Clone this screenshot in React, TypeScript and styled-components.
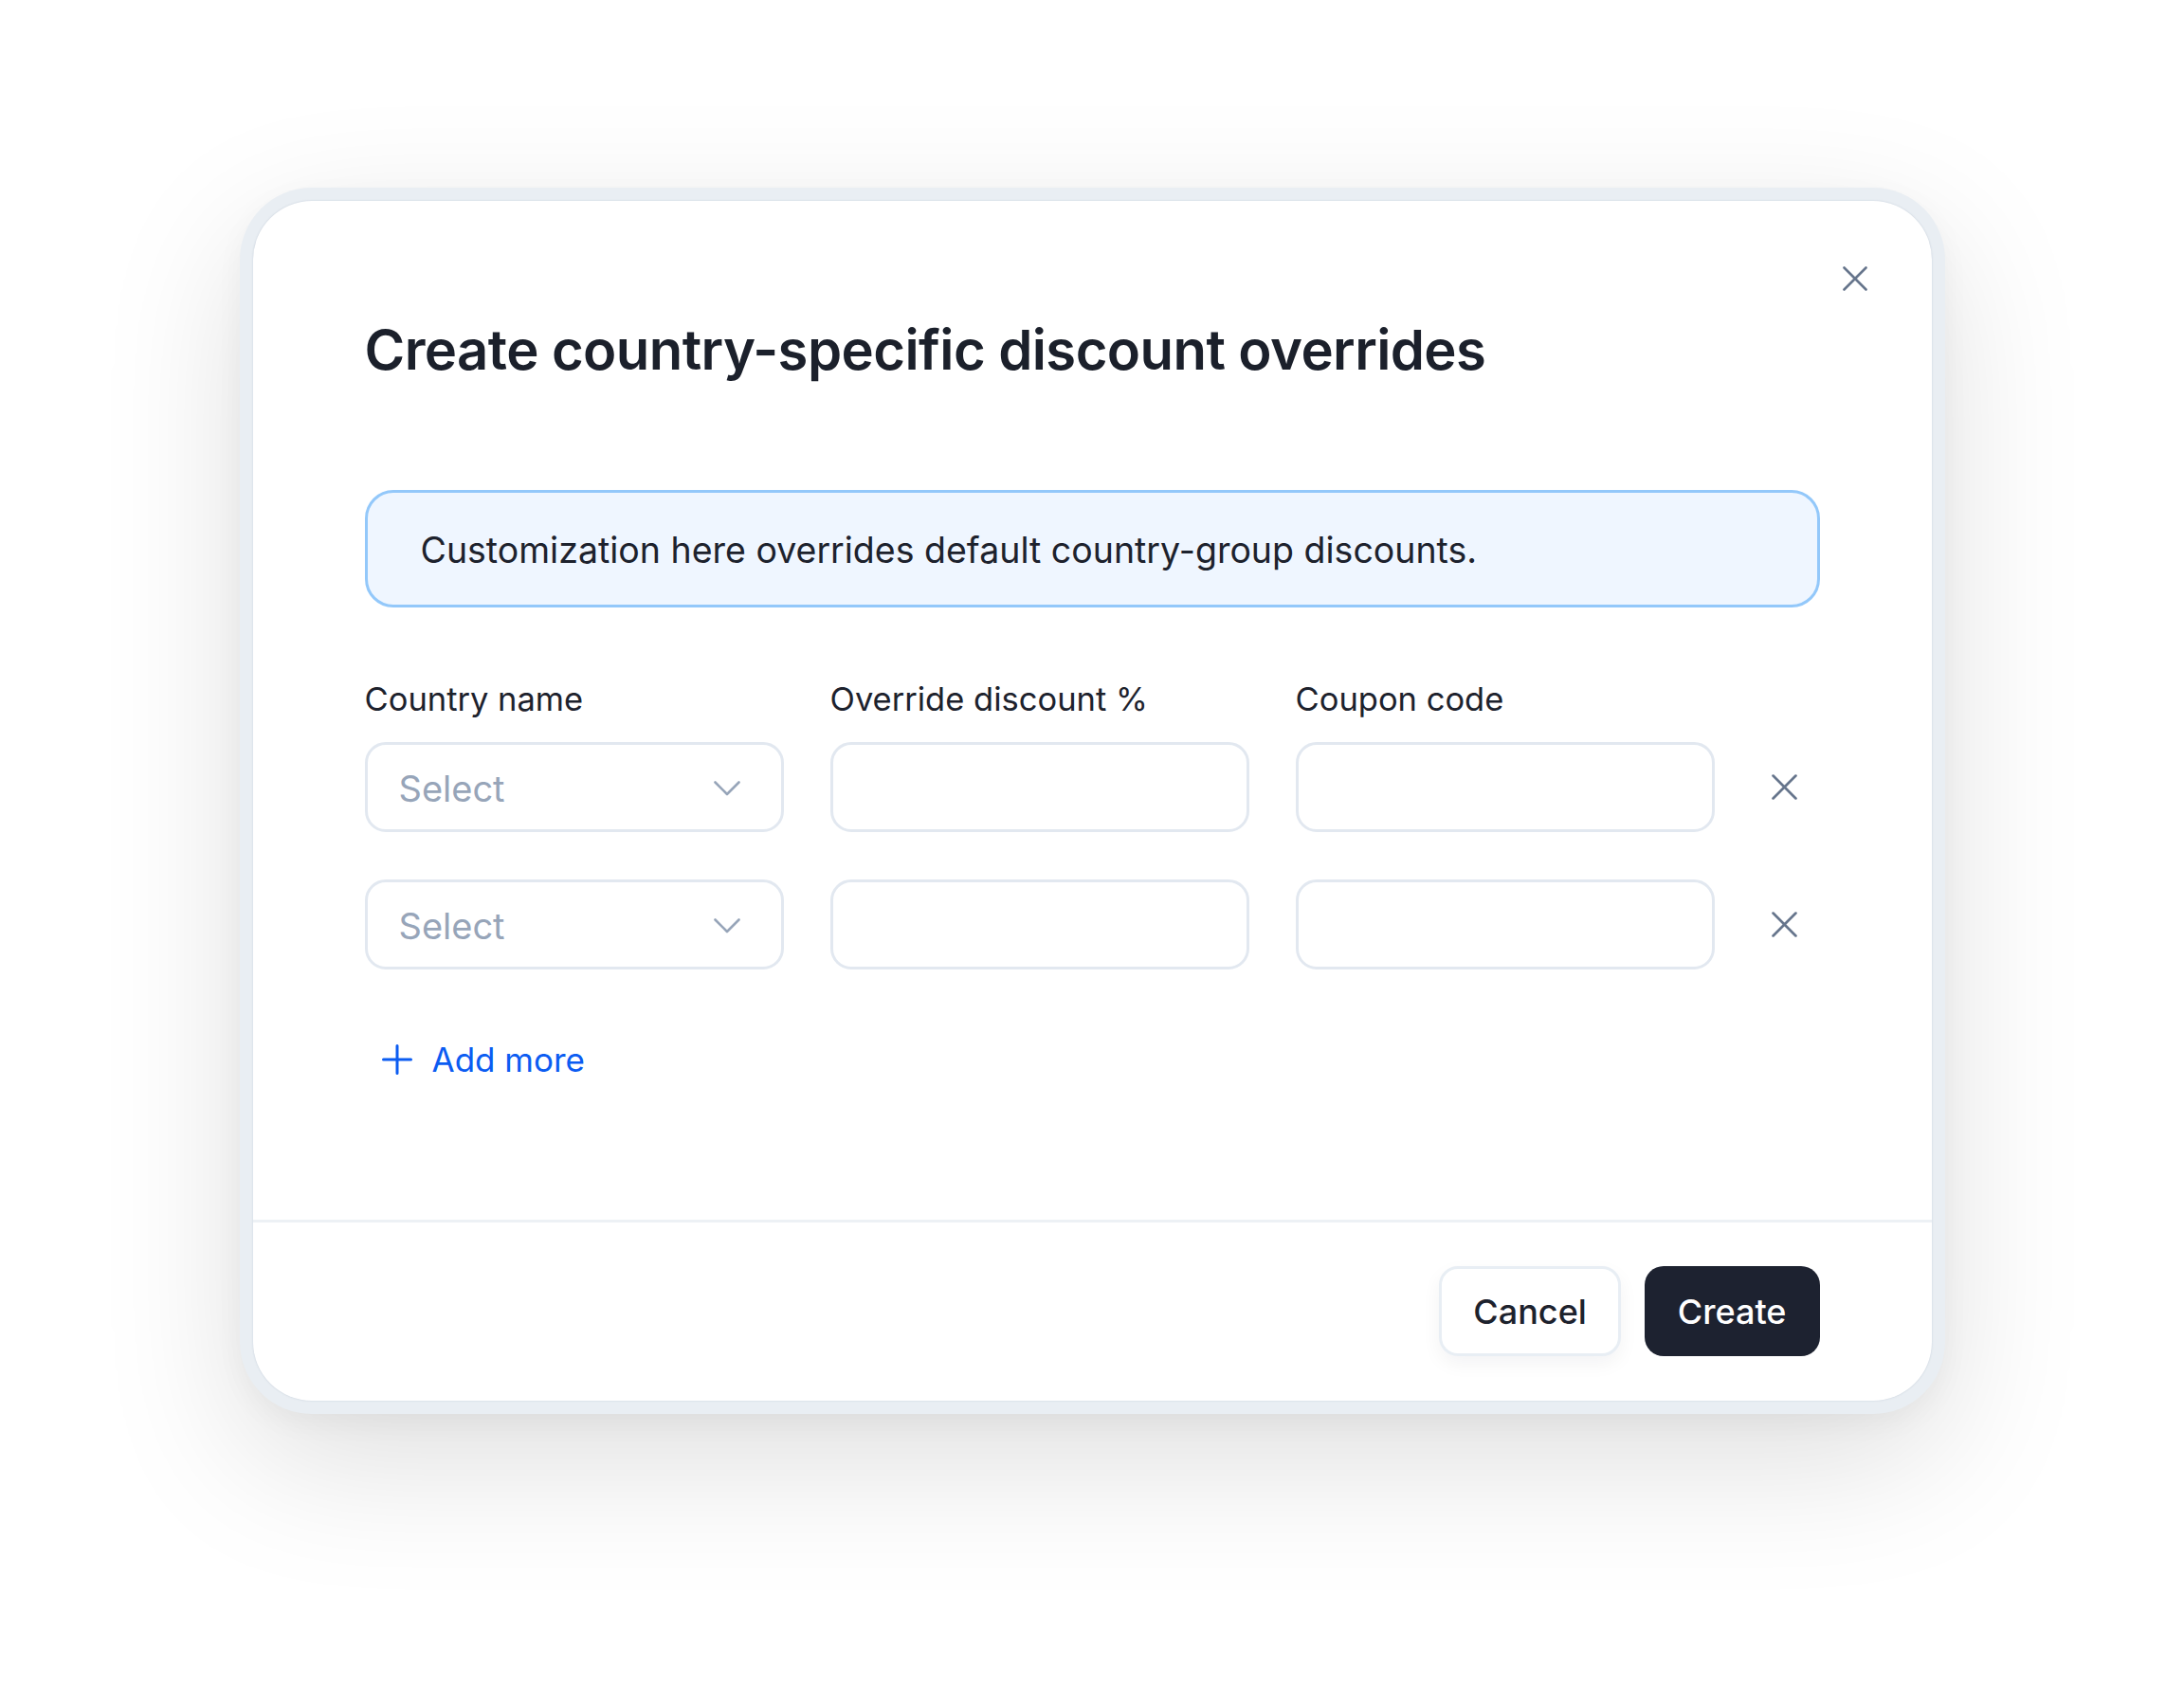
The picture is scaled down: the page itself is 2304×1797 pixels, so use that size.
import React from "react";
import styled, { createGlobalStyle, css } from "styled-components";

const GlobalStyle = createGlobalStyle`
  * {
    box-sizing: border-box;
  }
  html,
  body {
    margin: 0;
    padding: 0;
    background: #ffffff;
  }
  body {
    font-family: Inter, "Noto Sans", sans-serif;
    color: #1d222d;
  }
`;

const rows = ["first", "second"];

export default function App() {
  return (
    <>
      <GlobalStyle />
      <Page>
        <Frame>
          <Dialog>
            <CloseButton aria-label="Close">
              <CrossIcon size={26} />
            </CloseButton>
            <Body>
              <Title>Create country-specific discount overrides</Title>
              <InfoBox>
                Customization here overrides default country-group discounts.
              </InfoBox>

              <LabelRow>
                <Label>Country name</Label>
                <Label>Override discount %</Label>
                <Label>Coupon code</Label>
              </LabelRow>

              {rows.map((key) => (
                <FieldRow key={key}>
                  <SelectBox>
                    <Placeholder>Select</Placeholder>
                    <Chevron />
                  </SelectBox>
                  <TextInput />
                  <TextInput />
                  <RemoveButton aria-label="Remove row">
                    <CrossIcon size={27} />
                  </RemoveButton>
                </FieldRow>
              ))}

              <AddMore>
                <PlusIcon />
                Add more
              </AddMore>
            </Body>
            <Footer>
              <CancelButton>Cancel</CancelButton>
              <CreateButton>Create</CreateButton>
            </Footer>
          </Dialog>
        </Frame>
      </Page>
    </>
  );
}

function CrossIcon({ size }: { size: number }) {
  return (
    <svg width={size} height={size} viewBox="0 0 26 26" fill="none">
      <path
        d="M1.5 1.5 L24.5 24.5 M24.5 1.5 L1.5 24.5"
        stroke="#66758c"
        strokeWidth="2.6"
        strokeLinecap="round"
      />
    </svg>
  );
}

function Chevron() {
  return (
    <svg width="28" height="16" viewBox="0 0 28 16" fill="none">
      <path
        d="M1.5 1.5 L14 14 L26.5 1.5"
        stroke="#97a5b9"
        strokeWidth="2.6"
        strokeLinecap="round"
        strokeLinejoin="round"
      />
    </svg>
  );
}

function PlusIcon() {
  return (
    <svg width="32" height="32" viewBox="0 0 32 32" fill="none">
      <path
        d="M16 1.5 V30.5 M1.5 16 H30.5"
        stroke="#0b5cf2"
        strokeWidth="3"
        strokeLinecap="round"
      />
    </svg>
  );
}

const Page = styled.div`
  display: flex;
  justify-content: center;
  align-items: flex-start;
  min-height: 1797px;
  padding-top: 198px;
`;

const Frame = styled.div`
  width: 1799px;
  padding: 14px;
  background: #e9eef3;
  border-radius: 76px;
  box-shadow: 0 50px 150px rgba(0, 0, 0, 0.13), 0 10px 30px rgba(0, 0, 0, 0.04);
`;

const Dialog = styled.div`
  position: relative;
  background: #ffffff;
  border-radius: 62px;
  box-shadow: 0 0 2px rgba(148, 163, 184, 0.45);
`;

const CloseButton = styled.button`
  position: absolute;
  top: 69px;
  right: 68px;
  display: flex;
  padding: 0;
  border: none;
  background: none;
  cursor: pointer;
`;

const Body = styled.div`
  padding: 122px 118px 149px;
`;

const Title = styled.h2`
  margin: 0;
  font-size: 58px;
  line-height: 70px;
  font-weight: 600;
  letter-spacing: -0.01em;
  color: #1b202b;
`;

const InfoBox = styled.div`
  margin-top: 113px;
  padding: 39px 56px 35px;
  border: 3px solid #93c8fa;
  border-radius: 30px;
  background: #eff6ff;
  font-size: 37.5px;
  line-height: 44px;
  color: #1d222d;
`;

const columns = css`
  display: grid;
  grid-template-columns: repeat(3, 442px) 60px;
  column-gap: 49px;
`;

const LabelRow = styled.div`
  ${columns};
  margin-top: 76px;
`;

const Label = styled.div`
  font-size: 34.5px;
  line-height: 41px;
  color: #1d222d;
`;

const FieldRow = styled.div`
  ${columns};
  align-items: center;
  margin-top: 25px;

  & + & {
    margin-top: 50px;
  }
`;

const field = css`
  height: 95px;
  border: 3px solid #e2e8f0;
  border-radius: 22px;
  background: #ffffff;
`;

const SelectBox = styled.div`
  ${field};
  display: flex;
  align-items: center;
  justify-content: space-between;
  padding: 2px 43px 0 33px;
  cursor: pointer;
`;

const Placeholder = styled.span`
  font-size: 38px;
  line-height: 44px;
  color: #97a5b9;
`;

const TextInput = styled.input`
  ${field};
  width: 100%;
  padding: 0 30px;
  font-family: inherit;
  font-size: 37px;
  outline: none;
`;

const RemoveButton = styled.button`
  display: flex;
  justify-content: center;
  align-items: center;
  width: 50px;
  height: 50px;
  padding: 0;
  border: none;
  background: none;
  cursor: pointer;
`;

const AddMore = styled.button`
  display: flex;
  align-items: center;
  gap: 21px;
  margin-top: 75px;
  margin-left: 18px;
  padding: 0;
  border: none;
  background: none;
  font-family: inherit;
  font-size: 35px;
  line-height: 40px;
  color: #0b5cf2;
  cursor: pointer;
`;

const Footer = styled.div`
  display: flex;
  justify-content: flex-end;
  gap: 25px;
  padding: 46px 118px 47px;
  border-top: 3px solid #edf1f5;
`;

const buttonBase = css`
  height: 95px;
  border-radius: 20px;
  font-family: inherit;
  font-size: 36px;
  font-weight: 500;
  cursor: pointer;
`;

const CancelButton = styled.button`
  ${buttonBase};
  padding: 0 33px;
  border: 3px solid #e8eef4;
  background: #ffffff;
  color: #1d222d;
  box-shadow: 0 8px 20px rgba(15, 23, 42, 0.05);
`;

const CreateButton = styled.button`
  ${buttonBase};
  padding: 0 35px;
  border: none;
  background: #1d2230;
  color: #ffffff;
`;
